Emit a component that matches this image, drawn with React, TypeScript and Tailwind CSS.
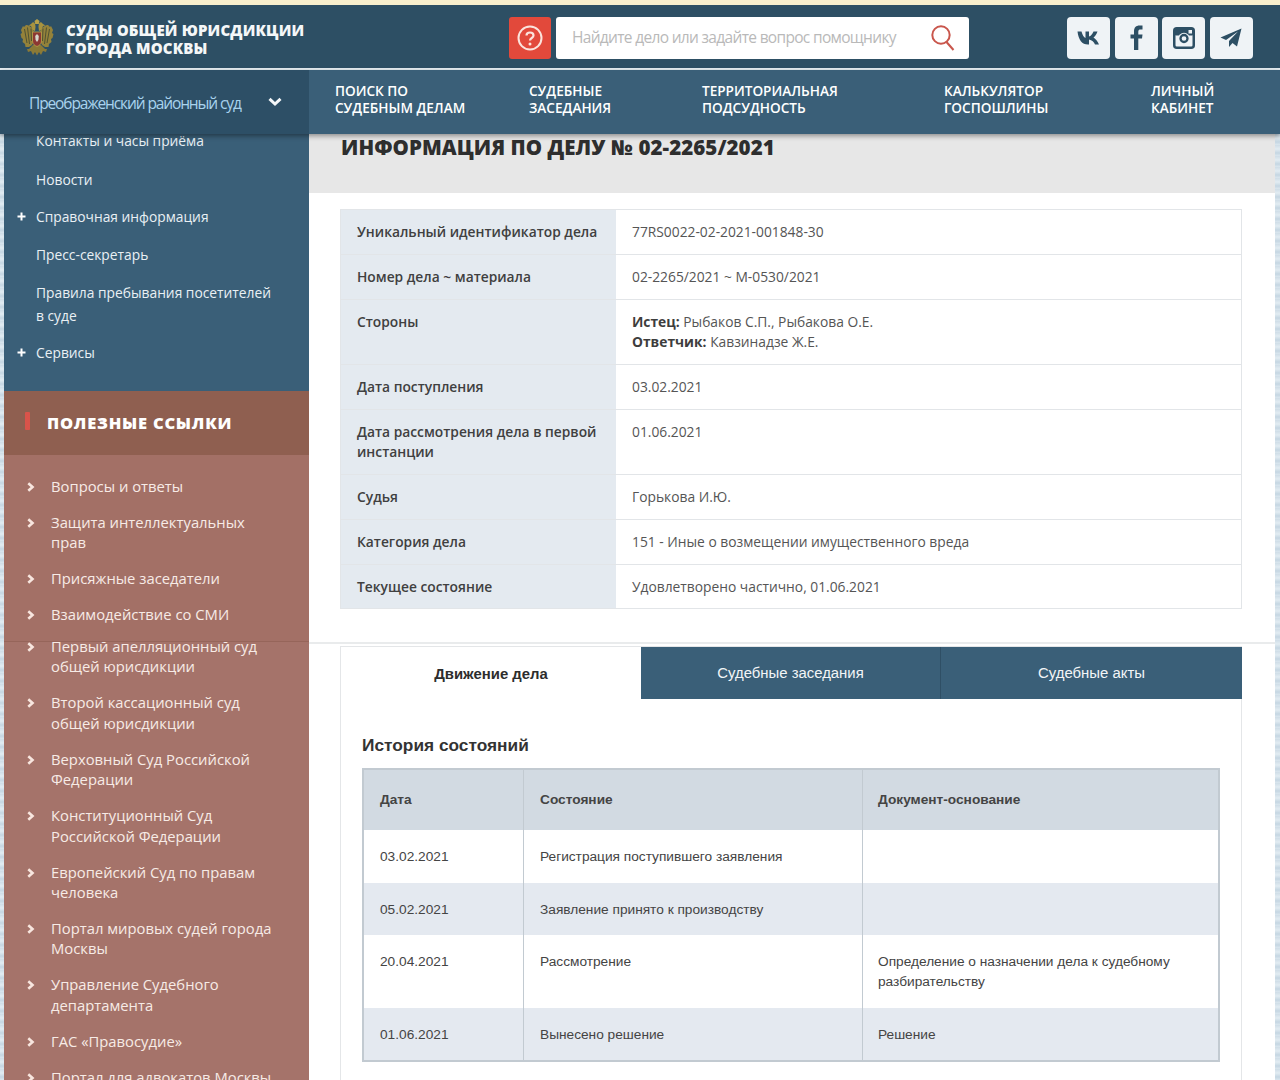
import React from "react";

const sans = "font-['Open_Sans','Noto_Sans',sans-serif]";
const arial = "font-['Liberation_Sans',Arial,sans-serif]";

function Eagle() {
  return (
    <svg width="34" height="37" viewBox="0 0 34 37" className="shrink-0 -mt-[1px]">
      <path d="M14 13 C12 8 9 6 6 6 L4 8 L3 7 L1 11 L2 14 L0.500 15 L1.500 19 L3 20 L2.500 23 L5 25 L5.500 28 L9 28 L12 26 L14 21Z" fill="#94823a" />
      <path d="M20 13 C22 8 25 6 28 6 L30 8 L31 7 L33 11 L32 14 L33.500 15 L32.500 19 L31 20 L31.500 23 L29 25 L28.500 28 L25 28 L22 26 L20 21Z" fill="#94823a" />
      <path d="M4.500 10 L7 24 M7.500 8.500 L9.500 25 M11 9.500 L11.500 22 M29.500 10 L27 24 M26.500 8.500 L24.500 25 M23 9.500 L22.500 22" stroke="#4f5233" strokeWidth="1" fill="none" />
      <path d="M12.500 3.500 C14.500 2.500 15.500 5 15.500 8 L15 12 L12.500 11 L11 7 L8.500 6.500 L11 5Z" fill="#a8933e" />
      <path d="M21.500 3.500 C19.500 2.500 18.500 5 18.500 8 L19 12 L21.500 11 L23 7 L25.500 6.500 L23 5Z" fill="#a8933e" />
      <path d="M14.500 2 L17 0 L19.500 2 L18.800 5 L15.200 5Z" fill="#b8a24a" />
      <path d="M13 26 L9 30 L7 30 L8 33 L11 32 L13 36 L15 33 L17 36.500 L19 33 L21 36 L23 32 L26 33 L27 30 L25 30 L21 26Z" fill="#8b7a36" />
      <path d="M12.500 13 H21.500 V22 C21.500 25.500 19 26.500 17 27.500 C15 26.500 12.500 25.500 12.500 22Z" fill="#8c3833" stroke="#b8a24a" strokeWidth="0.800" />
      <path d="M15.200 17 L17 15 L18.800 17 L18.400 21 L17 23 L15.600 21Z" fill="#d6d6cc" />
    </svg>
  );
}

function Chevron() {
  return (
    <svg width="8" height="10" viewBox="0 0 8 10" className="shrink-0 mt-[6px] -ml-[1px]">
      <path d="M1.300 1.300 L5.500 5 L1.300 8.700" stroke="#f8e6df" strokeWidth="2.600" fill="none" />
    </svg>
  );
}

function Plus() {
  return (
    <svg width="9" height="9" viewBox="0 0 9 9" className="absolute -left-[19px] top-[7px]">
      <path d="M4.500 0.500 V8.500 M0.500 4.500 H8.500" stroke="#ffffff" strokeWidth="2" />
    </svg>
  );
}

function Social({ children }: { children: React.ReactNode }) {
  return (
    <div className="w-[43px] h-[42px] rounded-[4px] bg-[#eff3f6] flex items-center justify-center">{children}</div>
  );
}

const infoRows: [string, React.ReactNode, string][] = [
  ["Уникальный идентификатор дела", "77RS0022-02-2021-001848-30", "h-[45px]"],
  ["Номер дела ~ материала", "02-2265/2021 ~ М-0530/2021", "h-[45px]"],
  [
    "Стороны",
    <>
      <b className="font-bold text-[#3d3d3d]">Истец:</b> Рыбаков С.П., Рыбакова О.Е.
      <br />
      <b className="font-bold text-[#3d3d3d]">Ответчик:</b> Кавзинадзе Ж.Е.
    </>,
    "h-[65px]",
  ],
  ["Дата поступления", "03.02.2021", "h-[45px]"],
  ["Дата рассмотрения дела в первой инстанции", "01.06.2021", "h-[65px]"],
  ["Судья", "Горькова И.Ю.", "h-[45px]"],
  ["Категория дела", "151 - Иные о возмещении имущественного вреда", "h-[45px]"],
  ["Текущее состояние", "Удовлетворено частично, 01.06.2021", "h-[44px]"],
];

const historyRows = [
  ["03.02.2021", "Регистрация поступившего заявления", "", "h-[53px] pt-[17px] bg-white"],
  ["05.02.2021", "Заявление принято к производству", "", "h-[52px] pt-[17px] bg-[#e4e9f0]"],
  ["20.04.2021", "Рассмотрение", "Определение о назначении дела к судебному разбирательству", "h-[73px] pt-[17px] bg-white"],
  ["01.06.2021", "Вынесено решение", "Решение", "h-[52px] pt-[17px] bg-[#e4e9f0]"],
];

const linksTop = [
  "Вопросы и ответы",
  "Защита интеллектуальных прав",
  "Присяжные заседатели",
  "Взаимодействие со СМИ",
];
const linksBottom = [
  "Первый апелляционный суд общей юрисдикции",
  "Второй кассационный суд общей юрисдикции",
  "Верховный Суд Российской Федерации",
  "Конституционный Суд Российской Федерации",
  "Европейский Суд по правам человека",
  "Портал мировых судей города Москвы",
  "Управление Судебного департамента",
  "ГАС «Правосудие»",
  "Портал для адвокатов Москвы",
];

function LinkItem({ text }: { text: string }) {
  return (
    <li className="flex gap-[16px] pl-[24px] pr-[30px] mb-[15.600px] text-[14.800px] leading-[20.400px] text-[#f7ebe6]">
      <Chevron />
      <span className="w-[225px]">{text}</span>
    </li>
  );
}

function NavItem({ a, b, w }: { a: string; b: string; w: string }) {
  return (
    <div className={`${w} shrink-0 text-[13.600px] leading-[17px] font-semibold text-white`}>
      {a}
      <br />
      {b}
    </div>
  );
}

export default function App() {
  return (
    <div className={`${sans} relative w-[1280px] h-[1080px] overflow-hidden bg-[#cfdde7] bg-[repeating-linear-gradient(0deg,#dbe7ef_0px,#c5d6e2_3px,#e2ecf2_7px,#cfdde7_11px)]`}>
      <div className="h-[5px] bg-[#f8efcd]" />

      <header className="relative z-20 h-[63px] bg-[#2d4f64] flex items-center pl-[20px] pt-[2px]">
        <Eagle />
        <div className="ml-[12px] w-[443px] pt-[2px] text-[15px] leading-[18px] font-extrabold tracking-[0.15px] text-[#f4f7f8]">
          СУДЫ ОБЩЕЙ ЮРИСДИКЦИИ
          <br />
          ГОРОДА МОСКВЫ
        </div>
        <div className="w-[42px] h-[42px] rounded-[3px] bg-[#e2493b] flex items-center justify-center">
          <svg width="26" height="26" viewBox="0 0 26 26">
            <circle cx="13" cy="13" r="11.500" stroke="#fbe3dc" strokeWidth="2" fill="none" />
            <path d="M9.500 10.500 C9.500 6.500 16.500 6.500 16.500 10.500 C16.500 13 13 13 13 15.500" stroke="#fbe3dc" strokeWidth="2.200" fill="none" />
            <circle cx="13" cy="19" r="1.500" fill="#fbe3dc" />
          </svg>
        </div>
        <div className="ml-[5px] w-[413px] h-[42px] rounded-[3px] bg-white flex items-center justify-between pl-[16px] pr-[14px]">
          <span className="pt-[1px] text-[15.500px] tracking-[-0.68px] text-[#b9b9b9]">Найдите дело или задайте вопрос помощнику</span>
          <svg width="24" height="26" viewBox="0 0 24 26">
            <circle cx="10" cy="10" r="8.700" stroke="#c9564c" strokeWidth="2" fill="none" />
            <path d="M15.500 17 L22.500 25" stroke="#c9564c" strokeWidth="2" />
          </svg>
        </div>
        <div className="ml-[98px] flex gap-[4.600px]">
          <Social>
            <svg width="24" height="14" viewBox="0 0 24 14">
              <path d="M0.500 0.500 H4.500 C5.500 4 7 6.500 8.500 7 V0.500 H12 V5.500 C13.800 5.200 15.500 2.800 16.500 0.500 H20.500 C19.800 3 18 5.300 16.500 6.500 C18.500 7.800 20.700 10.300 22 13.500 H18 C17 11 15 9 12 8.500 V13.500 H11 C5 13.500 1.500 9 0.500 0.500Z" fill="#2d4f64" />
            </svg>
          </Social>
          <Social>
            <svg width="13" height="25" viewBox="0 0 13 25">
              <path d="M4 25 V13.500 H0.500 V9.500 H4 V6.500 C4 2.500 6 0.500 9.500 0.500 H12.500 V4.500 H10.500 C9 4.500 8.300 5 8.300 6.800 V9.500 H12.500 L12 13.500 H8.300 V25Z" fill="#2d4f64" />
            </svg>
          </Social>
          <Social>
            <svg width="22" height="22" viewBox="0 0 22 22">
              <rect x="1.250" y="1.250" width="19.500" height="19.500" rx="2.500" stroke="#2d4f64" strokeWidth="2.500" fill="none" />
              <rect x="1" y="1" width="20" height="7.500" rx="2" fill="#2d4f64" />
              <circle cx="11" cy="11.500" r="5.800" fill="#eff3f6" />
              <circle cx="11" cy="11.500" r="3.500" fill="none" stroke="#2d4f64" strokeWidth="2.300" />
              <rect x="15.500" y="3" width="3.500" height="3.500" fill="#eff3f6" />
            </svg>
          </Social>
          <Social>
            <svg width="22" height="20" viewBox="0 0 22 20">
              <path d="M21.500 0.500 L0.500 9.500 L6 12 L18 3.500 L9 13 L9 19 L12.500 15 L17 18.500Z" fill="#2d4f64" />
            </svg>
          </Social>
        </div>
      </header>

      <div className="relative z-20 h-[2px] bg-[#e6eef2]" />

      <nav className="relative z-20 h-[64px] bg-[#3a5f78] flex shadow-[0_2px_5px_rgba(0,0,0,0.4)]">
        <div className="w-[309px] shrink-0 bg-[#2d4f66] flex items-center justify-between pl-[29px] pr-[27px]">
          <span className="pt-[4px] text-[15.500px] tracking-[-1.12px] text-[#a9d3ee]">Преображенский районный суд</span>
          <svg width="14" height="10" viewBox="0 0 14 10">
            <path d="M1.500 1.800 L7 7 L12.500 1.800" stroke="#f3f6f8" strokeWidth="3" fill="none" />
          </svg>
        </div>
        <div className="flex items-center pl-[26px] pb-[6px]">
          <NavItem a="ПОИСК ПО" b="СУДЕБНЫМ ДЕЛАМ" w="w-[194px]" />
          <NavItem a="СУДЕБНЫЕ" b="ЗАСЕДАНИЯ" w="w-[173px]" />
          <NavItem a="ТЕРРИТОРИАЛЬНАЯ" b="ПОДСУДНОСТЬ" w="w-[242px]" />
          <NavItem a="КАЛЬКУЛЯТОР" b="ГОСПОШЛИНЫ" w="w-[207px]" />
          <NavItem a="ЛИЧНЫЙ" b="КАБИНЕТ" w="w-[70px]" />
        </div>
      </nav>

      <div className="flex pl-[4px] pr-[5px] h-[946px]">
        <aside className="w-[305px] shrink-0 overflow-hidden flex flex-col">
          <ul className="bg-[#3a5f78] h-[257px] shrink-0 pl-[32px] text-[13.800px] leading-[23px] text-[#e9f0f4]">
            <li className="-mt-[5px]">Контакты и часы приёма</li>
            <li className="mt-[16px]">Новости</li>
            <li className="mt-[13.500px] relative">
              <Plus />
              Справочная информация
            </li>
            <li className="mt-[15px]">Пресс-секретарь</li>
            <li className="mt-[15px] w-[245px]">Правила пребывания посетителей в суде</li>
            <li className="mt-[14px] relative">
              <Plus />
              Сервисы
            </li>
          </ul>
          <div className="h-[64px] shrink-0 bg-[#8f5f50] flex items-center pl-[21px]">
            <div className="w-[5px] h-[18px] -mt-[5px] bg-[#d9534a] rounded-[1px]" />
            <div className="ml-[17px] text-[16.500px] font-extrabold tracking-[0.75px] text-white">ПОЛЕЗНЫЕ ССЫЛКИ</div>
          </div>
          <ul className="h-[187px] shrink-0 bg-[#a37066] pt-[21px] overflow-hidden border-b border-[#96655a]">
            {linksTop.map((t) => (
              <LinkItem key={t} text={t} />
            ))}
          </ul>
          <div className="flex-1 bg-[#a5736a] overflow-hidden">
            <ul className="-mt-[6px]">
              {linksBottom.map((t) => (
                <LinkItem key={t} text={t} />
              ))}
            </ul>
          </div>
        </aside>

        <main className="flex-1 bg-white overflow-hidden flex flex-col">
          <section className="h-[510px] shrink-0 border-b-2 border-[#e9ebec]">
            <div className="h-[59px] bg-[#e7e7e7] pl-[32px]">
              <h1 className="text-[20.500px] leading-[27px] font-extrabold text-[#2e2e2e] tracking-[0.05px]">
                ИНФОРМАЦИЯ ПО ДЕЛУ № 02-2265/2021
              </h1>
            </div>
            <div className="mt-[16px] ml-[31px] w-[902px] border border-[#e2e5e8] border-b-0 text-[13.800px] leading-[20px]">
              {infoRows.map(([label, value, h]) => (
                <div key={label} className={`${h} flex border-b border-[#e2e5e8]`}>
                  <div className="w-[275px] shrink-0 bg-[#e4eaf0] pl-[16px] pr-[12px] pt-[12px] font-semibold text-[#404040]">{label}</div>
                  <div className="flex-1 pl-[16px] pt-[12px] text-[#555555]">{value}</div>
                </div>
              ))}
            </div>
          </section>

          <section className={`${arial} mt-[2px] ml-[31px] w-[902px] flex-1 border-x border-[#e4e6e8] border-t`}>
            <div className="flex h-[52px] text-[14.900px] -mr-[1px]">
              <div className="w-[300px] pt-[2px] flex items-center justify-center font-bold text-[#2d2d2d]">Движение дела</div>
              <div className="w-[300px] pt-[1px] flex items-center justify-center bg-[#3a5f78] text-[#f2f5f7] border-r border-[#2f4f65]">Судебные заседания</div>
              <div className="flex-1 pt-[1px] flex items-center justify-center bg-[#3a5f78] text-[#f2f5f7]">Судебные акты</div>
            </div>
            <h2 className="mt-[35px] ml-[21px] text-[17.300px] leading-[22px] font-bold text-[#333333]">История состояний</h2>
            <div className="mt-[12px] ml-[21px] w-[858px] border-2 border-[#c2cad1] text-[13.700px] leading-[20px] text-[#444444]">
              <div className="flex h-[60px] bg-[#d2dae2] font-bold">
                <div className="w-[160px] pl-[16px] flex items-center border-r border-[#c2cad1]">Дата</div>
                <div className="w-[339px] pl-[16px] flex items-center border-r border-[#c2cad1]">Состояние</div>
                <div className="flex-1 pl-[15px] flex items-center">Документ-основание</div>
              </div>
              {historyRows.map(([d, s, doc, cls]) => (
                <div key={d} className={`flex ${cls}`}>
                  <div className="w-[160px] pl-[16px] -mt-[17px] pt-[17px] border-r border-[#c2cad1]">{d}</div>
                  <div className="w-[339px] pl-[16px] -mt-[17px] pt-[17px] border-r border-[#c2cad1]">{s}</div>
                  <div className="flex-1 pl-[15px] pr-[30px]">{doc}</div>
                </div>
              ))}
            </div>
          </section>
        </main>
      </div>
    </div>
  );
}
